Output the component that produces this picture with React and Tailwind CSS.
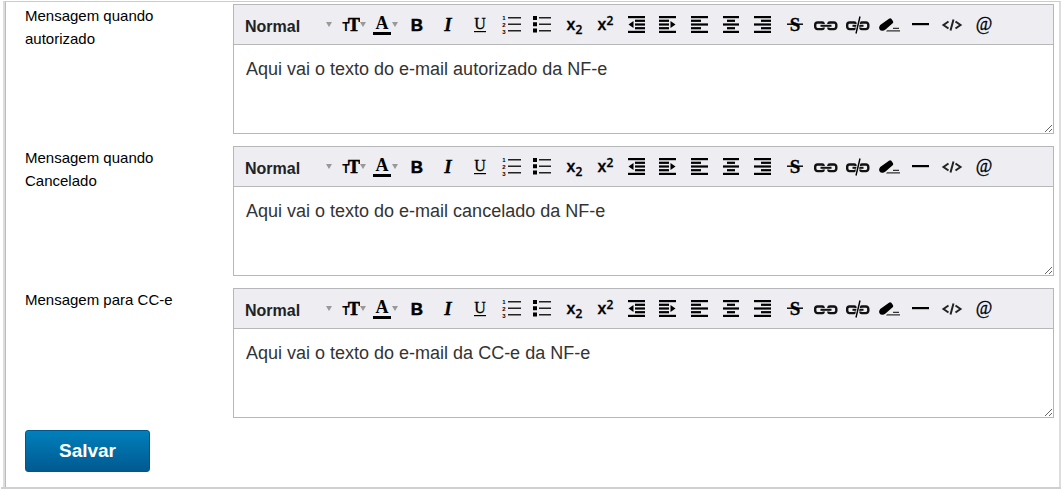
import React from "react";

const messages = [
  { id: "autorizado", label: "Mensagem quando autorizado", text: "Aqui vai o texto do e-mail autorizado da NF-e" },
  { id: "cancelado", label: "Mensagem quando Cancelado", text: "Aqui vai o texto do e-mail cancelado da NF-e" },
  { id: "cce", label: "Mensagem para CC-e", text: "Aqui vai o texto do e-mail da CC-e da NF-e" },
];

const SANS = "font-['Liberation_Sans',Arial,sans-serif]";
const SERIF = "font-['Liberation_Serif','Times_New_Roman',serif]";
const OPEN = "font-['Open_Sans',sans-serif]";

/**
 * Toolbar glyphs
 * - every glyph is drawn on the same 31x25 canvas
 */

function Glyph({ children }) {
  return (
    <svg aria-hidden="true" viewBox="0 0 31 25" className="h-[25px] w-[31px] shrink-0 fill-black">
      {children}
    </svg>
  );
}

function Char({ x = 16, y = 19, size = 17, className, children }) {
  return (
    <text x={x} y={y} fontSize={size} textAnchor="middle" className={className}>
      {children}
    </text>
  );
}

// rows: [x, width] for each of the five bars
function Bars({ rows, children }) {
  return (
    <Glyph>
      {rows.map(([x, width], i) => (
        <rect key={i} x={x} y={4 + i * 3.7} width={width} height="2.2" />
      ))}
      {children}
    </Glyph>
  );
}

function Chain() {
  return (
    <g fill="none" stroke="#111" strokeWidth="2.4">
      <path d="M13.7 12v-.2a1.5 1.5 0 0 0-1.5-1.3H7.5a2.3 2.3 0 0 0-2.3 2.3v2a2.3 2.3 0 0 0 2.3 2.3h4.700a1.5 1.5 0 0 0 1.5-1.3v-.2" />
      <path d="M18.3 12v-.2a1.5 1.5 0 0 1 1.5-1.3h4.2a2.3 2.3 0 0 1 2.3 2.3v2a2.3 2.3 0 0 1-2.3 2.3h-4.2a1.5 1.5 0 0 1-1.5-1.3v-.2" />
      <path d="M10.5 13.8h11" strokeWidth="2" />
    </g>
  );
}

const tools = [
  { name: "Negrito", icon: <Glyph><Char size={17} className={`${SANS} stroke-black stroke-[0.5px] font-bold`}>B</Char></Glyph> },
  { name: "Itálico", icon: <Glyph><Char x={15} size={19} className={`${SERIF} stroke-black stroke-[0.3px] font-bold italic`}>I</Char></Glyph> },
  {
    name: "Sublinhado",
    icon: (
      <Glyph>
        <Char y={17} size={16} className={`${SERIF} stroke-black stroke-[0.3px]`}>U</Char>
        <rect x="10" y="19" width="12" height="1.2" />
      </Glyph>
    ),
  },
  {
    name: "Lista numerada",
    icon: (
      <Glyph>
        <Char x={8} y={8} size={6} className={`${SANS} font-bold`}>1</Char>
        <Char x={8} y={15} size={6} className={`${SANS} font-bold`}>2</Char>
        <Char x={8} y={22} size={6} className={`${SANS} font-bold`}>3</Char>
        <path fill="#222" d="M12 5h13v1.4H12zM12 11.5h13v1.4H12zM12 18h13v1.4H12z" />
      </Glyph>
    ),
  },
  {
    name: "Lista",
    icon: (
      <Glyph>
        <path d="M6 4h4v4H6zM6 10.3h4v4H6zM6 16.5h4v4H6z" />
        <path fill="#222" d="M12 5h12v1.4H12zM12 11.5h12v1.4H12zM12 18h12v1.4H12z" />
      </Glyph>
    ),
  },
  {
    name: "Subscrito",
    icon: (
      <Glyph>
        <Char x={12} y={18} size={16} className={`${OPEN} stroke-black stroke-[0.3px] font-semibold`}>x</Char>
        <Char x={20} y={22} size={12} className={`${OPEN} stroke-black stroke-[0.3px] font-semibold`}>2</Char>
      </Glyph>
    ),
  },
  {
    name: "Sobrescrito",
    icon: (
      <Glyph>
        <Char x={12} y={18} size={16} className={`${OPEN} stroke-black stroke-[0.3px] font-semibold`}>x</Char>
        <Char x={20} y={13} size={12} className={`${OPEN} stroke-black stroke-[0.3px] font-semibold`}>2</Char>
      </Glyph>
    ),
  },
  {
    name: "Diminuir recuo",
    icon: (
      <Bars rows={[[6, 17], [13, 10], [13, 10], [13, 10], [6, 17]]}>
        <path d="M11.5 9v7l-5-3.500z" />
      </Bars>
    ),
  },
  {
    name: "Aumentar recuo",
    icon: (
      <Bars rows={[[6, 17], [6, 10], [6, 10], [6, 10], [6, 17]]}>
        <path d="M17.5 9v7l5-3.500z" />
      </Bars>
    ),
  },
  { name: "Alinhar à esquerda", icon: <Bars rows={[[7, 17], [7, 10], [7, 17], [7, 10], [7, 17]]} /> },
  { name: "Centralizar", icon: <Bars rows={[[7, 16], [11, 8], [7, 16], [11, 8], [7, 16]]} /> },
  { name: "Alinhar à direita", icon: <Bars rows={[[7, 17], [14, 10], [7, 17], [14, 10], [7, 17]]} /> },
  {
    name: "Tachado",
    icon: (
      <Glyph>
        <Char size={19} className={`${SERIF} stroke-black stroke-[0.3px] font-bold`}>S</Char>
        <rect x="8" y="11.5" width="16" height="1.4" />
      </Glyph>
    ),
  },
  { name: "Inserir link", icon: <Glyph><Chain /></Glyph> },
  {
    name: "Remover link",
    icon: (
      <Glyph>
        <Chain />
        <path d="M18 4.5l-4 17" stroke="#ededf2" strokeWidth="3" />
        <path d="M18 4.5l-4 17" stroke="#000" strokeWidth="1.4" />
      </Glyph>
    ),
  },
  {
    name: "Limpar formatação",
    icon: (
      <Glyph>
        <path d="M7.2 13L16 6.7q1.300-.9 2.300.1l1.600 2.200q.9 1.200-.2 2.200L12.500 17.500q-1.800 1.500-3.500 1.300l-1.800-.5q-2.200-2.500 0-5.300z" />
        <path fill="#333" d="M20 15.700h6v1.300h-6zM14 18.300h13v1.300H13z" />
      </Glyph>
    ),
  },
  { name: "Linha horizontal", icon: <Glyph><rect x="7" y="11" width="17" height="2.2" /></Glyph> },
  {
    name: "Código",
    icon: (
      <Glyph>
        <path d="M12.5 9.5l-5 3.5 5 3.5M19.5 9.5l5 3.5-5 3.5M17.5 7.5l-3 11" fill="none" stroke="#222" strokeWidth="2" />
      </Glyph>
    ),
  },
  { name: "Menção", icon: <Glyph><Char y={18} size={18} className={`${SERIF} stroke-black stroke-[0.3px]`}>@</Char></Glyph> },
];

function Caret() {
  return (
    <svg aria-hidden="true" viewBox="0 0 6 5" className="h-[5px] w-[6px] shrink-0 fill-[#999]">
      <path d="M0 0h6L3 5z" />
    </svg>
  );
}

function Toolbar({ id }) {
  return (
    <div role="toolbar" aria-label="Formatação" className="flex h-10 items-center border-b border-[#b5b7b9] bg-[#ededf2] pl-[11px]">
      <div className="flex w-[87px] items-center justify-between">
        <select
          id={`${id}-formato`}
          aria-label="Formato"
          className="w-20 appearance-none bg-transparent pt-1 text-base font-bold text-[#222]"
        >
          <option>Normal</option>
        </select>
        <Caret />
      </div>
      <button type="button" aria-label="Tamanho da fonte" className="flex w-[34px] items-center justify-end">
        <svg aria-hidden="true" viewBox="0 0 20 25" className="h-[25px] w-5 shrink-0 fill-black">
          <Char x={6} y={19} size={12} className={`${SANS} font-bold`}>T</Char>
          <Char x={14} y={19} size={18} className={`${SERIF} stroke-black stroke-[0.6px] font-bold`}>T</Char>
        </svg>
        <Caret />
      </button>
      <button type="button" aria-label="Cor do texto" className="flex w-[32px] items-center justify-end">
        <svg aria-hidden="true" viewBox="0 0 20 25" className="h-[25px] w-5 shrink-0 fill-black">
          <Char x={10} y={17} size={18} className={`${SERIF} font-bold`}>A</Char>
          <rect x="1" y="20" width="18" height="3" />
        </svg>
        <Caret />
      </button>
      <div className="ml-[3px] grid w-[598px] grid-cols-19">
        {tools.map((tool) => (
          <button key={tool.name} type="button" aria-label={tool.name} className="flex justify-center">
            {tool.icon}
          </button>
        ))}
      </div>
    </div>
  );
}

function MessageField({ id, label, text }) {
  return (
    <div className="flex">
      <label htmlFor={id} className="w-[208px] shrink-0 pr-10 text-[15px] leading-[23px] text-black">
        {label}
      </label>
      <div className="min-w-0 flex-1 border border-[#b5b7b9]">
        <Toolbar id={id} />
        <textarea
          id={id}
          defaultValue={text}
          className="block h-22 w-full resize px-3 pt-3 text-[18px] leading-6 text-[#333] outline-none"
        />
      </div>
    </div>
  );
}

export default function App() {
  return (
    <div className="bg-white pt-px font-['Liberation_Sans',Arial,sans-serif]">
      <div className="mr-px ml-[3px] border-t border-r-2 border-l-2 border-[#ddd] border-t-[#ccc]">
        <form className="border-l border-[#bbb] pt-0.5 pr-[5px] pb-[15px] pl-[19px]" onSubmit={(e) => e.preventDefault()}>
          <div className="flex flex-col gap-3">
            {messages.map((message) => (
              <MessageField key={message.id} {...message} />
            ))}
          </div>
          <button
            type="submit"
            className="mt-3 block h-[42px] w-[125px] rounded-[3px] border border-[#00578a] bg-linear-to-b from-[#0080bb] to-[#005a91] text-[19px] font-bold text-white"
          >
            Salvar
          </button>
        </form>
      </div>
      <div className="mx-px h-0.5 bg-[#d0d0d0]" />
    </div>
  );
}
